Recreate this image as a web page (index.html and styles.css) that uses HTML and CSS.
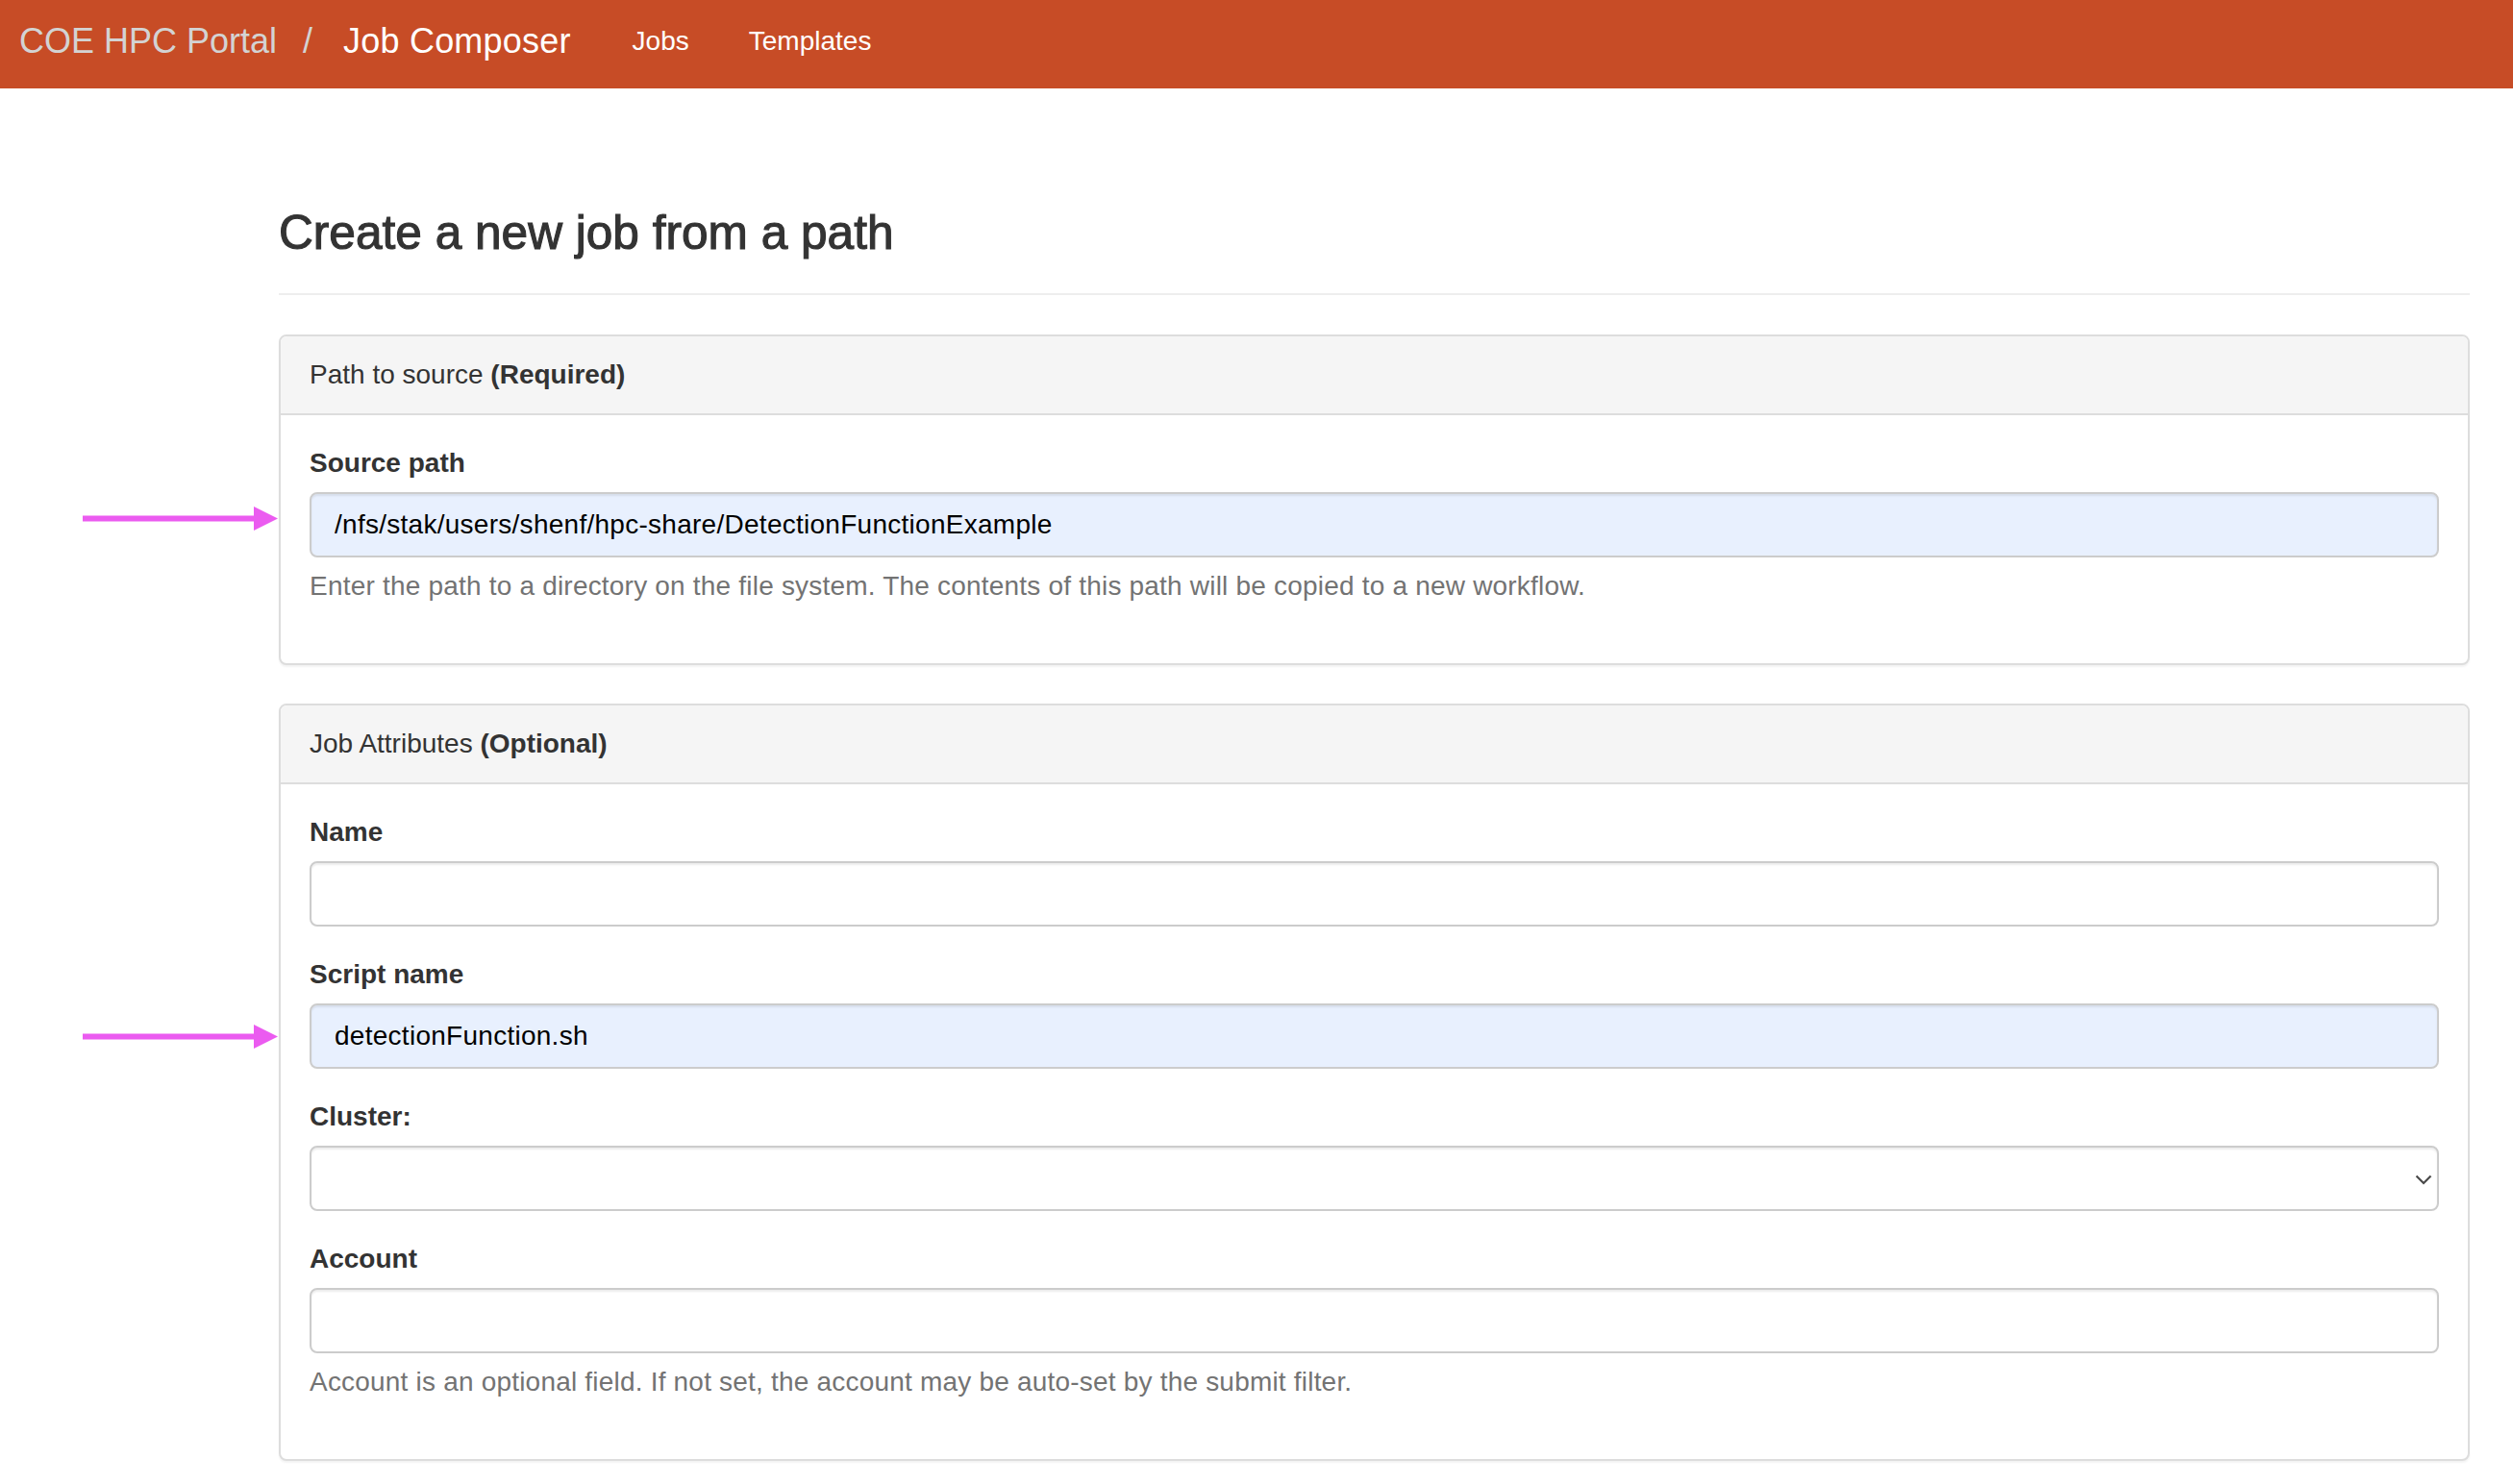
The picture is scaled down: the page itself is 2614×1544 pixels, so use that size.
FILE: index.html
```html
<!DOCTYPE html>
<html lang="en">
<head>
<meta charset="utf-8">
<title>Job Composer</title>
<link rel="stylesheet" href="styles.css">
</head>
<body>
<header class="navbar">
  <span class="brand-site">COE HPC Portal</span>
  <span class="brand-sep">/</span>
  <span class="brand-app">Job Composer</span>
  <nav class="nav-links">
    <a href="#">Jobs</a>
    <a href="#">Templates</a>
  </nav>
</header>

<main class="content">
  <div class="page-header">
    <h1>Create a new job from a path</h1>
  </div>

  <section class="panel">
    <div class="panel-heading">Path to source <strong>(Required)</strong></div>
    <div class="panel-body">
      <div class="form-group">
        <svg class="arrow arrow-source" width="203" height="25" viewBox="0 0 203 25"><rect x="0" y="9.5" width="180" height="6" fill="#eb5bf0"/><polygon points="178,0 203,12.5 178,25" fill="#eb5bf0"/></svg>
        <label for="source">Source path</label>
        <input id="source" class="form-control autofilled" type="text" value="/nfs/stak/users/shenf/hpc-share/DetectionFunctionExample">
        <p class="help-block">Enter the path to a directory on the file system. The contents of this path will be copied to a new workflow.</p>
      </div>
    </div>
  </section>

  <section class="panel">
    <div class="panel-heading">Job Attributes <strong>(Optional)</strong></div>
    <div class="panel-body">
      <div class="form-group">
        <label for="name">Name</label>
        <input id="name" class="form-control" type="text" value="">
      </div>
      <div class="form-group">
        <svg class="arrow arrow-script" width="203" height="25" viewBox="0 0 203 25"><rect x="0" y="9.5" width="180" height="6" fill="#eb5bf0"/><polygon points="178,0 203,12.5 178,25" fill="#eb5bf0"/></svg>
        <label for="script">Script name</label>
        <input id="script" class="form-control autofilled" type="text" value="detectionFunction.sh">
      </div>
      <div class="form-group">
        <label for="cluster">Cluster:</label>
        <div class="select-wrap">
          <select id="cluster" class="form-control select-control"><option></option></select>
          <svg class="chevron" width="18" height="11" viewBox="0 0 18 11"><polyline points="1.5,1.5 9,9 16.5,1.5" fill="none" stroke="#4a4a4a" stroke-width="2.2"/></svg>
        </div>
      </div>
      <div class="form-group">
        <label for="account">Account</label>
        <input id="account" class="form-control" type="text" value="">
        <p class="help-block">Account is an optional field. If not set, the account may be auto-set by the submit filter.</p>
      </div>
    </div>
  </section>
</main>
</body>
</html>
```

FILE: styles.css
```css
html {
  overflow: hidden;
}

body {
  margin: 0;
  font-family: "Liberation Sans", Arial, Helvetica, sans-serif;
  font-size: 28px;
  line-height: 40px;
  color: #333;
  background: #fff;
}

/* Navbar */
.navbar {
  display: flex;
  align-items: center;
  height: 92px;
  box-sizing: border-box;
  padding: 0 0 7px 20px;
  background: #c74c26;
}

.brand-site,
.brand-sep,
.brand-app {
  font-size: 36px;
  line-height: 40px;
}

.brand-site,
.brand-sep {
  color: #d3d3d3;
}

.brand-sep {
  margin-left: 27px;
}

.brand-app {
  margin-left: 32px;
  color: #fff;
  letter-spacing: 0.2px;
}

.nav-links {
  display: flex;
  margin-left: 64px;
  gap: 62px;
}

.nav-links a {
  font-size: 28px;
  line-height: 40px;
  color: #fff;
  text-decoration: none;
}

/* Content */
.content {
  margin: 0 45px 0 290px;
}

.page-header {
  margin: 123px 0 41px;
  padding-bottom: 35px;
  border-bottom: 2px solid #eee;
}

.page-header h1 {
  margin: 0;
  font-size: 49.6px;
  line-height: 1.1;
  font-weight: normal;
  color: #333;
  -webkit-text-stroke: 1.1px #333;
}

/* Panels */
.panel {
  border: 2px solid #ddd;
  border-radius: 8px;
  margin-bottom: 40px;
  background: #fff;
  box-shadow: 0 2px 2px rgba(0, 0, 0, 0.05);
}

.panel-heading {
  padding: 20px 30px;
  background: #f5f5f5;
  border-bottom: 2px solid #ddd;
  border-radius: 6px 6px 0 0;
  color: #333;
}

.panel-body {
  padding: 30px;
}

/* Forms */
.form-group {
  position: relative;
  margin-bottom: 30px;
}

.form-group label {
  display: block;
  font-weight: bold;
  margin-bottom: 10px;
  line-height: 40px;
}

.form-control {
  display: block;
  width: 100%;
  height: 68px;
  box-sizing: border-box;
  padding: 12px 24px;
  margin: 0;
  font-family: inherit;
  font-size: 28px;
  line-height: 40px;
  letter-spacing: 0.27px;
  color: #555;
  background: #fff;
  border: 2px solid #ccc;
  border-radius: 8px;
  box-shadow: inset 0 2px 2px rgba(0, 0, 0, 0.075);
  outline: none;
}

.autofilled {
  background: #e8f0fe;
  color: #000;
}

.select-wrap {
  position: relative;
}

.select-control {
  -webkit-appearance: none;
  appearance: none;
}

.chevron {
  position: absolute;
  right: 7px;
  top: 30px;
  pointer-events: none;
}

.help-block {
  margin: 10px 0 0;
  color: #737373;
  line-height: 40px;
  letter-spacing: 0.2px;
}

/* Annotation arrows */
.arrow {
  position: absolute;
  left: -236px;
}

.arrow-source {
  top: 65px;
}

.arrow-script {
  top: 72px;
}
```
